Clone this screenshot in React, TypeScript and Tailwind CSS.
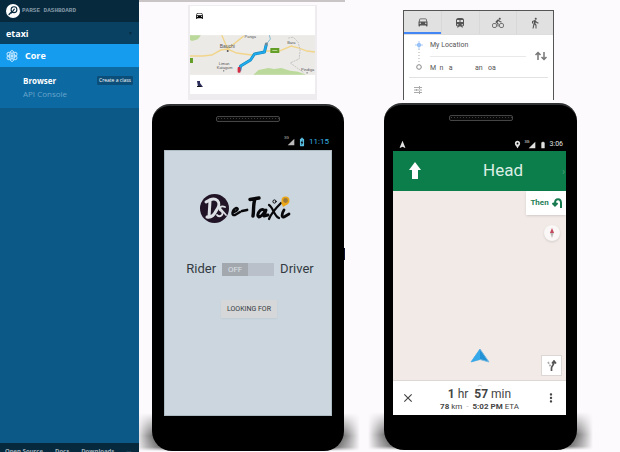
import type { ReactNode } from "react";
import {
  MdBatteryChargingFull, MdBatteryStd, MdClose, MdDirectionsBike, MdDirectionsCar, MdDirectionsWalk,
  MdLocationPin, MdMoreVert, MdNavigation, MdSignalCellular4Bar, MdTrain,
} from "react-icons/md";

function Sidebar() {
  return (
    <aside className="relative z-10 flex w-[139px] shrink-0 flex-col bg-[#0c5987] font-['Open_Sans',sans-serif] text-white">
      <header className="flex h-[22px] shrink-0 items-center gap-[2px] bg-[#06293e] pl-[6px]">
        <svg viewBox="0 0 14 14" className="size-[14px]" aria-hidden="true">
          <circle cx="7" cy="7" r="7" fill="#fff" />
          <circle cx="8" cy="5.7" r="2.9" fill="none" stroke="#06293e" strokeWidth="1.1" />
          <path d="M5 8.5 3 10.5M8.3 5.2 5.5 9" stroke="#06293e" strokeWidth="1.2" strokeLinecap="round" />
        </svg>
        <span className="font-['Liberation_Sans_Narrow','Liberation_Mono',monospace] text-[6px] leading-none font-bold text-[#8398a6]">PARSE DASHBOARD</span>
      </header>
      <button className="flex h-[22px] shrink-0 items-center justify-between bg-[#094163] pt-[2px] pr-[6px] pl-[6px] text-[9px] font-bold">
        <span>etaxi</span>
        <span className="text-[5px] text-[#06293e]">▼</span>
      </button>
      <nav>
        <a href="#core" className="flex h-[23px] items-center gap-[7px] bg-[#169cee] pl-[6px] text-[9px] font-bold">
          <svg viewBox="0 0 24 24" className="size-[12px]" fill="none" stroke="#b9e4ff" strokeWidth="2" aria-hidden="true">
            <ellipse cx="12" cy="12" rx="5" ry="11" />
            <ellipse cx="12" cy="12" rx="5" ry="11" transform="rotate(60 12 12)" />
            <ellipse cx="12" cy="12" rx="5" ry="11" transform="rotate(120 12 12)" />
            <circle cx="12" cy="12" r="2.5" fill="#b9e4ff" />
          </svg>
          Core
        </a>
        <div className="flex h-[41px] items-start justify-between bg-[#0c69a2] pt-[7px] pr-[6px] pl-[23px] text-[8px] leading-[13px]">
          <div className="flex flex-col">
            <a href="#browser" className="font-bold">Browser</a>
            <a href="#console" className="text-[#68a5cb]">API Console</a>
          </div>
          <button className="mt-[2px] h-[9px] w-[36px] rounded-[1px] bg-[#0b4e79] text-center text-[5px] leading-[9px] whitespace-nowrap">Create a class</button>
        </div>
      </nav>
      <footer className="mt-auto flex h-[9px] shrink-0 gap-[12px] overflow-hidden bg-[#06293e] pt-[4px] pl-[5px] text-[6px] leading-[9px] font-bold whitespace-nowrap text-[#a3b3bd]">
        <a href="#source">Open Source</a>
        <a href="#docs">Docs</a>
        <a href="#downloads">Downloads</a>
        <span className="text-[#39586b]">···</span>
      </footer>
    </aside>
  );
}

function Phone({ children }: { children: ReactNode }) {
  return (
    <div className="relative flex grow flex-col">
      <div className="pointer-events-none absolute -inset-x-[16px] bottom-0 h-[38px] bg-[linear-gradient(90deg,transparent,#0007_5%,#000_12%,#000_88%,#0007_95%,transparent)] [mask-image:linear-gradient(transparent,#000c_60%,#0009_90%,transparent)]" />
      <section className="relative flex w-full grow flex-col rounded-t-[18px] rounded-b-[20px] border-t-2 border-[#303132] bg-black px-[9px] pb-[35px]">
        <div className="mx-auto mt-[10px] h-[6px] w-[64px] shrink-0 rounded-[2px] border border-[#454545] bg-[radial-gradient(circle,#3b3b3b_35%,#080808_45%)] bg-[size:3px_3px]" />
        {children}
      </section>
    </div>
  );
}

function RouteMap() {
  return (
    <svg viewBox="0 0 126 40" className="block h-[40px] w-full font-['Liberation_Sans',sans-serif]" role="img" aria-label="Route near Bauchi">
      <rect width="126" height="40" fill="#eceae7" />
      <path d="M0 0H11L8 4 2 6 0 5Z M64 40 69 35 79 33 85 34 92 33 101 36 109 37 117 40Z" fill="#bad99a" />
      <path d="M0 21 13 21 22 20 31 15 38 14 47 18 62 20 77 16 90 16 102 11 110 13 118 16 126 17M38 14 32 0M38 14 54 1" fill="none" stroke="#f1d58b" strokeWidth="1.4" />
      <path d="M99 3 104 2 109 7 111 15 110 24 101 28 108 33 115 38" fill="none" stroke="#c5c4c4" strokeWidth="1" strokeDasharray="2 .8" />
      <path d="M77 9 81 4 80 0" fill="none" stroke="#82b9ce" strokeWidth="1" />
      <path d="M50 36 51 31 61 25 65 19 75 17 77 9" fill="none" stroke="#168bb9" strokeWidth="3" strokeLinejoin="round" />
      <path d="M50 36 51 31 61 25 65 19 75 17 77 9" fill="none" stroke="#20aaf0" strokeWidth="1.8" strokeLinejoin="round" />
      <path d="M0 23H3V28H0Z M81 13H90V18H81Z" fill="#639f26" />
      <path d="M83 15.5H88" stroke="#b9d69a" />
      <rect x="48" y="32" width="3" height="6" rx="1" fill="#d32d43" />
      <circle cx="77" cy="9" r="1.5" fill="#708894" />
      <g fill="#555">
        <text x="30" y="13" fontSize="5">Bauchi</text>
        <text x="55" y="3" fontSize="4">Panga</text>
        <text x="98" y="9" fontSize="4">Bara</text>
        <text x="29" y="30" fontSize="4">Liman</text>
        <text x="27" y="34" fontSize="4">Katagum</text>
        <text x="112" y="36" fontSize="4">Pindiga</text>
        <circle cx="38" cy="16" r="1" /><circle cx="34" cy="36" r=".7" /><circle cx="118" cy="38" r=".7" />
      </g>
    </svg>
  );
}

function TaxiLogo() {
  return (
    <svg viewBox="0 0 92 32" className="mr-[4px] h-[32px] w-[92px] shrink-0" role="img" aria-label="Ds e-Taxi">
      <circle cx="14.5" cy="15.5" r="14.5" fill="#211426" />
      <path d="M10 8 9 24M6 9C16 2 23 9 16 18 14 22 11 25 7 24" fill="none" stroke="#dce0e5" strokeWidth="3" strokeLinecap="round" />
      <path d="M25 14C21 12 17 16 21 18 25 21 20 25 17 22M19 14 26 22" fill="none" stroke="#dce0e5" strokeWidth="1.8" strokeLinecap="round" />
      <g fill="none" stroke="#08080a" strokeLinecap="round" strokeLinejoin="round">
        <path d="M34 19C38 18 39 15 36 15 32 17 31 23 35 22L40 19" strokeWidth="2.4" />
        <path d="M42 18 47 17" strokeWidth="2.8" />
        <path d="M50 6.500 59 5M55 6C53 11 54 17 53 23" strokeWidth="3.400" />
        <path d="M64 17C60 15 56 22 59 24 62 24 65 18 66 17L64 23 68 22" strokeWidth="3" />
        <path d="M69 12C73 14 74 23 79 25M81 10C76 15 71 21 69 26" strokeWidth="2.2" />
        <path d="M84 17C82 20 81 25 84 24L89 21" strokeWidth="2.8" />
        <circle cx="74.5" cy="8.500" r="1.600" strokeWidth="1" />
      </g>
      <circle cx="85.500" cy="7.500" r="3.200" fill="#9d7a39" stroke="#eca719" strokeWidth="1.600" />
      <path d="m81 9 2 5 5-3Z" fill="#eca719" />
    </svg>
  );
}

function Status({ time, blue = false }: { time: string; blue?: boolean }) {
  return (
    <>
      <span className="-mr-[3px] self-start text-[4px] leading-[8px]">3G</span>
      <MdSignalCellular4Bar className="size-[8px]" />
      {blue ? <MdBatteryChargingFull className="mx-[1px] size-[10px] text-[#5abee0]" /> : <MdBatteryStd className="mx-[2px] size-[8px]" />}
      <time className={blue ? "text-[8px] text-[#35b5e5]" : "text-[7px]"}>{time}</time>
    </>
  );
}

function TaxiColumn() {
  return (
    <div className="flex w-[206px] shrink-0 flex-col border-t-2 border-[#c9c5c7] pt-[3px] pr-[1px] pb-[1px] pl-[13px]">
      <article className="mx-auto flex h-[95px] w-[129px] shrink-0 translate-x-1 flex-col border-x-2 border-t border-b-[6px] border-[#eeecee] bg-white">
        <div className="flex h-[29px] shrink-0 items-start pt-[5px] pl-[5px]"><MdDirectionsCar className="size-[9px]" /></div>
        <RouteMap />
        <div className="pt-[5px] pl-[6px]">
          <svg viewBox="0 0 8 8" className="size-[8px]" aria-hidden="true"><path d="M1 1H4V3L7 7H2Z" fill="#292c59" /><path d="M1 6H5V7H1Z" fill="#111" /></svg>
        </div>
      </article>
      <div className="relative mt-[4px] flex grow flex-col">
        <span className="absolute top-[144px] -right-[1px] h-[12px] w-[2px] bg-[#101533]" />
        <Phone>
          <div className="mt-[10px] flex h-[18px] w-full shrink-0 items-center justify-end gap-[1px] pt-[2px] pr-[6px] font-[Roboto,sans-serif] text-[#bbb]"><Status time="11:15" blue /></div>
          <main className="mx-[3px] flex grow flex-col items-center border border-[#aebbc2] bg-[#ccd6df] pt-[42px] font-[Roboto,sans-serif] text-[#333b42]">
            <TaxiLogo />
            <div className="mt-[36px] ml-[4px] flex items-center gap-[6px] text-[13px] leading-[16px]">
              <span>Rider</span>
              <button role="switch" aria-checked="false" aria-label="Driver mode" className="flex h-[13px] w-[52px] bg-[#b9c0ca] text-[8px] leading-[13px] text-[#dce0e4]"><span className="h-full w-1/2 bg-[#a3a8af] text-center">OFF</span></button>
              <span>Driver</span>
            </div>
            <button className="mt-[23px] ml-[2px] h-[18px] w-[56px] rounded-[1px] bg-[#d6d7d8] text-[7px] leading-[18px] whitespace-nowrap shadow-xs">LOOKING FOR</button>
          </main>
        </Phone>
      </div>
    </div>
  );
}

function DirectionsCard() {
  return (
    <article className="mx-auto h-[90px] w-[151px] shrink-0 -translate-x-0.5 border border-b-0 border-[#555] bg-white font-[Roboto,sans-serif] text-[#555]">
      <div className="grid h-[24px] grid-cols-4 border-b border-[#ddd] bg-[#e2e1e2] text-[12px]">
        <button aria-label="Driving" className="grid place-items-center border-b-2 border-[#4285f4]"><MdDirectionsCar /></button>
        <button aria-label="Transit" className="grid place-items-center border-l border-[#d9d8d9]"><MdTrain /></button>
        <button aria-label="Cycling" className="grid place-items-center border-l border-[#d9d8d9]"><MdDirectionsBike /></button>
        <button aria-label="Walking" className="grid place-items-center border-l border-[#d9d8d9]"><MdDirectionsWalk /></button>
      </div>
      <div className="mx-[5px] flex h-[43px] items-center border-b border-[#e2e2e2] pr-[1px] pl-[6px] text-[7px]">
        <svg viewBox="0 0 8 32" className="h-[32px] w-[8px]" aria-hidden="true">
          <circle cx="4" cy="5" r="2" fill="#69a8f5" /><path d="M4 1V9M0 5H8" stroke="#a9cafa" />
          <path d="M4 9V22" stroke="#aaa" strokeDasharray="1 2" />
          <circle cx="4" cy="27" r="2.300" fill="none" stroke="#888" />
        </svg>
        <div className="ml-[7px] flex grow flex-col pt-[2px] pb-[1px]">
          <span className="border-b border-[#e9e9e9] pb-[3px] leading-[16px]">My Location</span>
          <span className="pt-[3px] leading-[16px] whitespace-pre">M  n   a             an   oa</span>
        </div>
        <button aria-label="Swap locations" className="ml-[9px]">
          <svg viewBox="0 0 12 10" className="h-[10px] w-[12px]" fill="none" stroke="#777" strokeWidth="1.5"><path d="M3 9V2M.5 4 3 1.5 5.5 4M9 1V8M6.500 6 9 8.500 11.500 6" /></svg>
        </button>
      </div>
      <button aria-label="Options" className="mt-[8px] ml-[10px] block">
        <svg viewBox="0 0 8 8" className="size-[8px]" fill="none" stroke="#aaa"><path d="M0 1.500H5M6 1.500H8M0 4H2M3 4H8M0 6.500H5M6 6.500H8M5.500 0V3M2.500 3V5M5.500 5V8" /></svg>
      </button>
    </article>
  );
}

function NavigationColumn() {
  return (
    <div className="ml-[32px] flex w-[207px] shrink-0 flex-col px-[7px] pt-[10px] pb-[2px]">
      <DirectionsCard />
      <div className="relative mt-[3px] flex grow flex-col">
        <Phone>
          <div className="mt-[17px] flex h-[13px] shrink-0 items-center justify-end gap-[1px] pr-[5px] pl-[5px] font-[Roboto,sans-serif] text-[#e0e0e0]">
            <MdNavigation className="mr-auto size-[9px]" /><MdLocationPin className="mr-[2px] size-[9px]" /><Status time="3:06" />
          </div>
          <main className="mr-[2px] flex grow flex-col bg-[#f1eae7] font-[Roboto,sans-serif]">
            <header className="flex h-[40px] shrink-0 items-center bg-[#0c7e4b] pl-[15px] text-[17px] text-[#dceee5]">
              <svg viewBox="0 0 14 18" className="h-[18px] w-[14px]" aria-hidden="true"><path d="M7 0 13 8H10V17H4V8H1Z" fill="#fff" /></svg>
              <h1 className="grow pl-[42px] text-center">Head</h1>
              <span className="w-[24px] pr-[1px] text-right text-[10px] text-[#4ba077]">›</span>
            </header>
            <aside className="flex h-[24px] w-[40px] shrink-0 items-center justify-center gap-[3px] self-end bg-white text-[8px] font-bold text-[#287e58] shadow-sm">
              Then
              <svg viewBox="0 0 10 10" className="size-[10px]" fill="none" stroke="#187b50" strokeWidth="2"><path d="M9 10V5C9 0 3 0 3 5V7M.5 5 3 7.5 5.500 5" /></svg>
            </aside>
            <button aria-label="Compass" className="mt-[10px] mr-[6px] grid size-[16px] shrink-0 place-items-center self-end rounded-full bg-[#faf7f6] shadow-sm">
              <svg viewBox="0 0 6 12" className="h-[10px] w-[6px]"><path d="M3 0 5.500 6H.5Z" fill="#c44b5d" /><path d="M3 12 1 6H5Z" fill="#b9b6b6" /></svg>
            </button>
            <div className="mt-auto flex h-[38px] shrink-0 items-end justify-end pr-[4px] pb-[4px]">
              <svg viewBox="0 0 20 15" className="mr-[51px] mb-[13px] h-[15px] w-[20px]" aria-label="Current position"><path d="M10 1 19 14 10 11.500 1 14Z" fill="#2391d6" stroke="#7cbbe0" strokeWidth="1" /><path d="M10 1V11.500L1 14Z" fill="#35a9ea" /></svg>
              <button aria-label="Alternate routes" className="grid size-[21px] place-items-center border border-[#dcd7d5] bg-white">
                <svg viewBox="0 0 10 12" className="h-[12px] w-[10px]" fill="none" stroke="#565656" strokeWidth="1.700"><path d="M4.500 11V8C4.500 6 7 5 7 2M5 3.500 7 1 9 3.500" /><path d="M1 2 4 7" stroke="#aaa" strokeDasharray="2 1" /></svg>
              </button>
            </div>
            <footer className="relative flex h-[35px] shrink-0 items-center justify-between border-t border-[#ddd8d6] bg-white px-[8px] text-[#444]">
              <svg viewBox="0 0 8 4" className="absolute top-[3px] left-1/2 h-[3px] w-[8px] -translate-x-1/2" fill="none" stroke="#bbb"><path d="M1 3Q4 0 7 3" /></svg>
              <button aria-label="Close navigation"><MdClose className="size-[14px]" /></button>
              <div className="text-center">
                <p className="pt-[2px] text-[12px] leading-[14px]"><b>1</b> hr&nbsp; <b>57</b> min</p>
                <p className="text-[8px] leading-[11px] whitespace-nowrap"><b>78</b> km&nbsp; <span className="text-[#bbb]">-</span>&nbsp; <b>5:02 PM</b> ETA</p>
              </div>
              <button aria-label="More"><MdMoreVert className="size-[14px]" /></button>
            </footer>
          </main>
        </Phone>
      </div>
    </div>
  );
}

export default function App() {
  return (
    <div className="flex h-screen min-h-[420px] overflow-hidden bg-[#fcfafc]">
      <Sidebar />
      <TaxiColumn />
      <NavigationColumn />
    </div>
  );
}
